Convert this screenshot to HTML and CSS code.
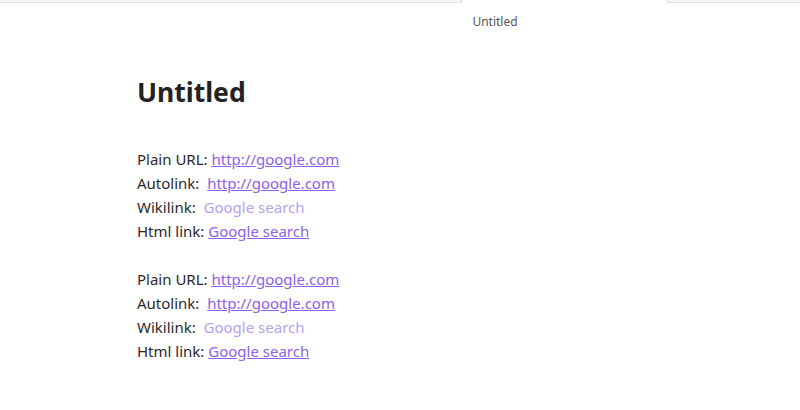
FILE: index.html
```html
<!DOCTYPE html>
<html>
<head>
<meta charset="utf-8">
<link rel="stylesheet" href="styles.css">
</head>
<body>
<div class="tabbar">
  <div class="tab-side left"></div>
  <div class="tab-active"></div>
  <div class="tab-side right"></div>
</div>
<div class="title">Untitled</div>
<main class="doc">
  <h1>Untitled</h1>
  <div class="block">
    <div>Plain URL: <a class="ext" href="#">http://google.com</a></div>
    <div>Autolink:&nbsp; <a class="ext" href="#">http://google.com</a></div>
    <div>Wikilink:&nbsp; <a class="wiki" href="#">Google search</a></div>
    <div>Html link: <a class="ext" href="#">Google search</a></div>
  </div>
  <div class="block">
    <div>Plain URL: <a class="ext" href="#">http://google.com</a></div>
    <div>Autolink:&nbsp; <a class="ext" href="#">http://google.com</a></div>
    <div>Wikilink:&nbsp; <a class="wiki" href="#">Google search</a></div>
    <div>Html link: <a class="ext" href="#">Google search</a></div>
  </div>
</main>
</body>
</html>
```
FILE: styles.css
```css
html, body { margin: 0; padding: 0; background: #fff; }
body { font-family: "Noto Sans", "Open Sans", sans-serif; color: #2a2a2a; }
.tabbar { display: flex; height: 3px; }
.tab-side { flex: 1; background: #f3f3f3; border-bottom: 1px solid #e0e0e0; height: 2px; }
.tab-side.left { flex: 0 0 462px; border-bottom-right-radius: 6px; border-right: 1px solid #e0e0e0; }
.tab-side.right { border-bottom-left-radius: 6px; border-left: 1px solid #e0e0e0; }
.tab-active { width: 203px; background: #fff; }
.title { text-align: center; font-size: 12px; color: #555; margin-top: 11px; padding-left: 190px; line-height: 16px; }
.doc { padding-left: 137px; padding-top: 44px; }
h1 { font-size: 26.5px; font-weight: 700; margin: 0 0 37px; line-height: 36px; color: #222; }
.block { font-size: 15px; line-height: 24px; margin-bottom: 24px; }
a.ext { color: #8a62ee; text-decoration: underline; }
a.wiki { color: #b39ff5; text-decoration: none; }
```
